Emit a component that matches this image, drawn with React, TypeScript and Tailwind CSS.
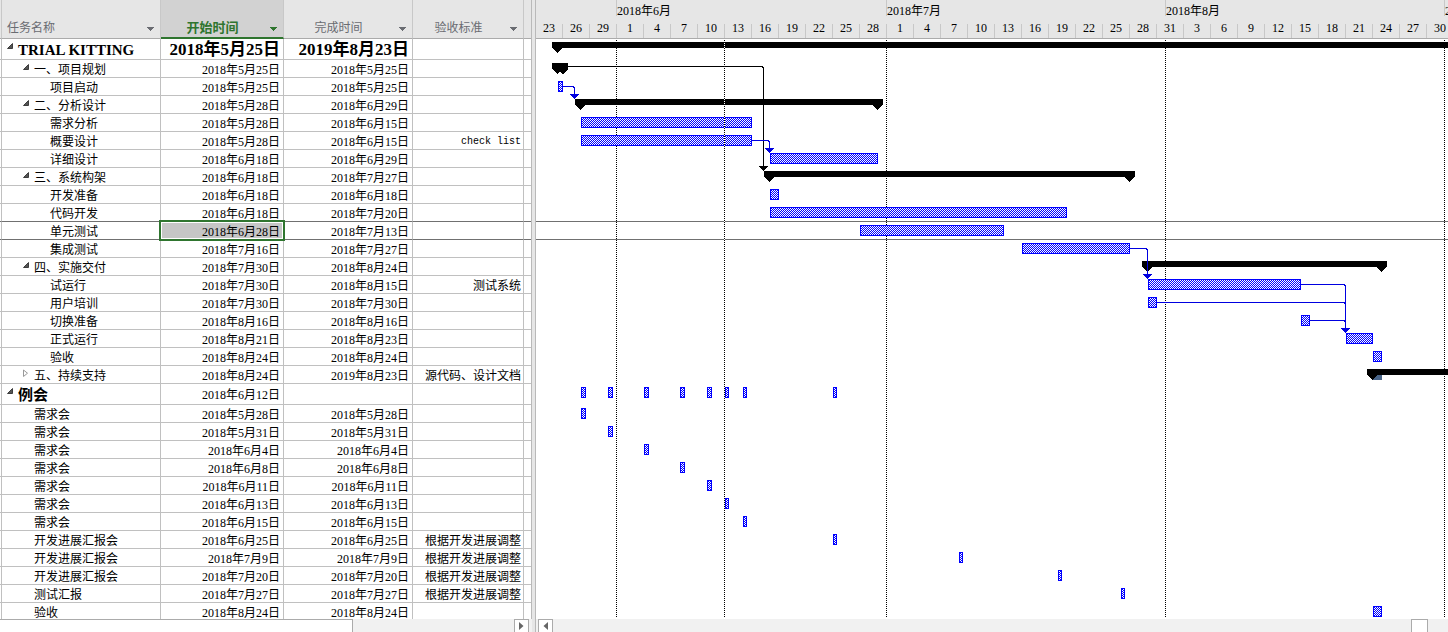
import React from 'react';

type Kind = 'title' | 'section' | 'task' | 'group' | 'meeting';

interface Row {
  kind: Kind;
  name: string;
  start: string;
  finish: string;
  note?: string;
  collapsed?: boolean;
  // [x, width] of each bar in the chart
  bars?: [number, number][];
}

const rows: Row[] = [
  { kind: 'title', name: 'TRIAL KITTING', start: '2018年5月25日', finish: '2019年8月23日' },
  { kind: 'section', name: '一、项目规划', start: '2018年5月25日', finish: '2018年5月25日' },
  { kind: 'task', name: '项目启动', start: '2018年5月25日', finish: '2018年5月25日', bars: [[22, 5]] },
  { kind: 'section', name: '二、分析设计', start: '2018年5月28日', finish: '2018年6月29日' },
  { kind: 'task', name: '需求分析', start: '2018年5月28日', finish: '2018年6月15日', bars: [[45, 171]] },
  { kind: 'task', name: '概要设计', start: '2018年5月28日', finish: '2018年6月15日', note: 'check list', bars: [[45, 171]] },
  { kind: 'task', name: '详细设计', start: '2018年6月18日', finish: '2018年6月29日', bars: [[234, 108]] },
  { kind: 'section', name: '三、系统构架', start: '2018年6月18日', finish: '2018年7月27日' },
  { kind: 'task', name: '开发准备', start: '2018年6月18日', finish: '2018年6月18日', bars: [[234, 9]] },
  { kind: 'task', name: '代码开发', start: '2018年6月18日', finish: '2018年7月20日', bars: [[234, 297]] },
  { kind: 'task', name: '单元测试', start: '2018年6月28日', finish: '2018年7月13日', bars: [[324, 144]] },
  { kind: 'task', name: '集成测试', start: '2018年7月16日', finish: '2018年7月27日', bars: [[486, 108]] },
  { kind: 'section', name: '四、实施交付', start: '2018年7月30日', finish: '2018年8月24日' },
  { kind: 'task', name: '试运行', start: '2018年7月30日', finish: '2018年8月15日', note: '测试系统', bars: [[612, 153]] },
  { kind: 'task', name: '用户培训', start: '2018年7月30日', finish: '2018年7月30日', bars: [[612, 9]] },
  { kind: 'task', name: '切换准备', start: '2018年8月16日', finish: '2018年8月16日', bars: [[765, 9]] },
  { kind: 'task', name: '正式运行', start: '2018年8月21日', finish: '2018年8月23日', bars: [[810, 27]] },
  { kind: 'task', name: '验收', start: '2018年8月24日', finish: '2018年8月24日', bars: [[837, 9]] },
  { kind: 'section', name: '五、持续支持', start: '2018年8月24日', finish: '2019年8月23日', note: '源代码、设计文档', collapsed: true },
  {
    kind: 'group', name: '例会', start: '2018年6月12日', finish: '',
    bars: [[45, 5], [72, 5], [108, 5], [144, 5], [171, 5], [189, 4], [207, 4], [297, 4]],
  },
  { kind: 'meeting', name: '需求会', start: '2018年5月28日', finish: '2018年5月28日', bars: [[45, 5]] },
  { kind: 'meeting', name: '需求会', start: '2018年5月31日', finish: '2018年5月31日', bars: [[72, 5]] },
  { kind: 'meeting', name: '需求会', start: '2018年6月4日', finish: '2018年6月4日', bars: [[108, 5]] },
  { kind: 'meeting', name: '需求会', start: '2018年6月8日', finish: '2018年6月8日', bars: [[144, 5]] },
  { kind: 'meeting', name: '需求会', start: '2018年6月11日', finish: '2018年6月11日', bars: [[171, 5]] },
  { kind: 'meeting', name: '需求会', start: '2018年6月13日', finish: '2018年6月13日', bars: [[189, 4]] },
  { kind: 'meeting', name: '需求会', start: '2018年6月15日', finish: '2018年6月15日', bars: [[207, 4]] },
  { kind: 'meeting', name: '开发进展汇报会', start: '2018年6月25日', finish: '2018年6月25日', note: '根据开发进展调整', bars: [[297, 4]] },
  { kind: 'meeting', name: '开发进展汇报会', start: '2018年7月9日', finish: '2018年7月9日', note: '根据开发进展调整', bars: [[423, 4]] },
  { kind: 'meeting', name: '开发进展汇报会', start: '2018年7月20日', finish: '2018年7月20日', note: '根据开发进展调整', bars: [[522, 4]] },
  { kind: 'meeting', name: '测试汇报', start: '2018年7月27日', finish: '2018年7月27日', note: '根据开发进展调整', bars: [[585, 4]] },
  { kind: 'meeting', name: '验收', start: '2018年8月24日', finish: '2018年8月24日', bars: [[837, 9]] },
];

const SELECTED = 10;
const LAST = rows.length - 1;

const isTall = (kind: Kind) => kind === 'title' || kind === 'group';
const rowTops = rows.map((_, i) => rows.slice(0, i).reduce((y, r) => y + (isTall(r.kind) ? 21 : 18), 0));

const days = [
  23, 26, 29, 1, 4, 7, 10, 13, 16, 19, 22, 25, 28, 1, 4, 7, 10, 13, 16, 19, 22, 25, 28, 31,
  3, 6, 9, 12, 15, 18, 21, 24, 27, 30,
];

const indent: Record<Kind, string> = {
  title: 'pl-[4px]',
  group: 'pl-[4px]',
  section: 'pl-[20px]',
  task: 'pl-[48px]',
  meeting: 'pl-[32px]',
};

function Toggle({ collapsed, name }: { collapsed?: boolean; name: string }) {
  return (
    <button type="button" aria-label={name} aria-expanded={!collapsed} className="flex h-[14px] w-[12px] shrink-0 items-start pt-[3px]">
      <svg width="8" height="9" viewBox="0 0 8 9">
        {collapsed ? (
          <path d="M1.5 1v6.500L5.500 4.200z" fill="#fff" stroke="#999" />
        ) : (
          <path d="M6.500 1.500v5h-5z" fill="#555" stroke="#222" strokeWidth="0.8" />
        )}
      </svg>
    </button>
  );
}

function ColumnHeader({ label, active, left }: { label: string; active?: boolean; left?: boolean }) {
  return (
    <th
      scope="col"
      className={
        active
          ? 'h-[39px] border-r border-b-2 border-r-[#c8c8c8] border-b-[#2f752f] bg-[#d2d2d2] p-0 align-top font-bold text-[#2f752f]'
          : 'h-[39px] border-r border-b border-r-[#c8c8c8] border-b-[#ababab] p-0 align-top font-normal text-[#6a6c72]'
      }
    >
      <div className="flex h-[37px] items-center pt-[18px]">
        <span className={left ? 'flex-1 pl-[5px] text-left text-[12px]' : active ? 'flex-1 text-center text-[13px]' : 'flex-1 text-center text-[12px]'}>
          {label}
        </span>
        <button type="button" aria-label={label} className="flex w-[19px] shrink-0 justify-center pt-[2px]">
          <svg width="7" height="4" viewBox="0 0 7 4" shapeRendering="crispEdges">
            <path d="M0 0h7L3.500 4z" fill="currentColor" />
          </svg>
        </button>
      </div>
    </th>
  );
}

function TaskTable() {
  return (
    <table className="w-full table-fixed border-separate border-spacing-0 border-r border-[#b9b9b9]">
      <colgroup>
        <col className="w-[2px]" />
        <col className="w-[159px]" />
        <col className="w-[123px]" />
        <col className="w-[129px]" />
        <col className="w-[111px]" />
        <col />
      </colgroup>
      <thead>
        <tr className="bg-[#e6e6e6]">
          <td className="border-r border-b border-r-[#c8c8c8] border-b-[#ababab] p-0" />
          <ColumnHeader label="任务名称" left />
          <ColumnHeader label="开始时间" active />
          <ColumnHeader label="完成时间" />
          <ColumnHeader label="验收标准" />
          <td className="border-b border-[#ababab] p-0" />
        </tr>
      </thead>
      <tbody>
        {rows.map((row, i) => {
          const line =
            i === LAST
              ? 'border-r border-r-[#c0c0c0] p-0 '
              : i === SELECTED || i === SELECTED - 1
                ? 'border-r border-b border-r-[#c0c0c0] border-b-[#707070] p-0 '
                : 'border-r border-b border-r-[#c0c0c0] border-b-[#c0c0c0] p-0 ';
          const box = isTall(row.kind) ? 'h-[20px] leading-[22px] ' : i === LAST ? 'h-[16px] leading-[20px] ' : 'h-[17px] leading-[20px] ';
          const dateSize = row.kind === 'title' ? 'text-[17px] font-bold ' : '';
          const toggled = row.kind === 'title' || row.kind === 'group' || row.kind === 'section';
          return (
            <tr key={i} className="whitespace-nowrap">
              <td className={line} />
              <td className={line}>
                <div className={box + 'flex items-start ' + indent[row.kind]}>
                  {toggled && <Toggle collapsed={row.collapsed} name={row.name} />}
                  <span className={isTall(row.kind) ? 'text-[15px] font-bold' : ''}>{row.name}</span>
                </div>
              </td>
              <td className={line + 'relative text-right'}>
                {i === SELECTED && (
                  <span className="absolute inset-0 z-10 border border-white bg-[#c6c6c6] outline-2 outline-[#2f752f]" />
                )}
                <div className={box + dateSize + 'relative z-20 pr-[3px]'}>{row.start}</div>
              </td>
              <td className={line + 'text-right'}>
                <div className={box + dateSize + 'pr-[3px]'}>{row.finish}</div>
              </td>
              <td className={line + 'text-right'}>
                <div className={box + (row.note === 'check list' ? "pr-[2px] font-['Liberation_Mono',monospace] text-[10px]" : 'pr-[2px]')}>
                  {row.note}
                </div>
              </td>
              <td className={line.replace('border-r ', '')} />
            </tr>
          );
        })}
      </tbody>
    </table>
  );
}

function Timescale() {
  return (
    <div className="flex h-[39px] flex-col justify-between overflow-hidden border-b border-[#ababab] bg-[#e6e6e6]">
      <div className="flex h-[16px] leading-[22px] whitespace-nowrap">
        <div className="w-[80px] shrink-0" />
        <div className="w-[270px] shrink-0 border-l border-[#c8c8c8]">2018年6月</div>
        <div className="w-[279px] shrink-0 border-l border-[#c8c8c8]">2018年7月</div>
        <div className="w-[279px] shrink-0 border-l border-[#c8c8c8]">2018年8月</div>
        <div className="w-[270px] shrink-0 border-l border-[#c8c8c8]">2018年9月</div>
      </div>
      <div className="flex h-[14px] leading-[8px]">
        {days.map((d, i) => (
          <div key={i} className="w-[27px] shrink-0 border-r border-[#c8c8c8] text-center">
            {d}
          </div>
        ))}
      </div>
    </div>
  );
}

function Summary({ row, from, to }: { row: number; from: number; to?: number }) {
  const y = rowTops[row] + 3;
  const end = to ?? 4000;
  return (
    <g fill="#000">
      <rect x={from} y={y} width={end - from} height="6" />
      <path d={`M${from} ${y + 5}h11l-5.5 6z`} />
      {to !== undefined && <path d={`M${to - 11} ${y + 5}h11l-5.5 6z`} />}
    </g>
  );
}

function Link({ d, x, y, color }: { d: string; x?: number; y?: number; color: string }) {
  return (
    <g>
      <path d={d} fill="none" stroke={color} />
      {x !== undefined && y !== undefined && <path d={`M${x - 4} ${y}h9l-4.5 5z`} fill={color} />}
    </g>
  );
}

function Chart() {
  return (
    <svg width="100%" height="580" className="block bg-white" shapeRendering="crispEdges" role="img" aria-label="2018年">
      <defs>
        <pattern id="hatch" width="2" height="2" patternUnits="userSpaceOnUse">
          <rect width="2" height="2" fill="#fff" />
          <rect width="1" height="1" fill="#0000ff" />
          <rect x="1" y="1" width="1" height="1" fill="#0000ff" />
        </pattern>
      </defs>
      <rect y="182" width="100%" height="1" fill="#707070" />
      <rect y="200" width="100%" height="1" fill="#707070" />
      {[80, 350, 629, 908].map((x) => (
        <path key={x} d={`M${x + 0.5} 1V578`} stroke="#000" strokeDasharray="1 1" />
      ))}

      <Summary row={0} from={16} />
      <path d="M16 24h16v6l-5 5-3-2-3 2-5-5z" fill="#000" />
      <Summary row={3} from={39} to={347} />
      <Summary row={7} from={228} to={599} />
      <Summary row={12} from={606} to={851} />
      <rect x="837" y="336" width="9" height="5" fill="#486488" />
      <Summary row={18} from={831} />

      {rows.map((row, i) =>
        (row.bars ?? []).map(([x, w]) => (
          <g key={`${i}-${x}`}>
            <rect x={x} y={rowTops[i] + 3} width={w} height="11" fill="#0000ff" />
            <rect x={x + 1} y={rowTops[i] + 4} width={w - 2} height="9" fill="url(#hatch)" />
          </g>
        )),
      )}

      <path d="M188.500 1V578" stroke="#fff" />
      <path d="M188.500 1V578" stroke="#000" strokeDasharray="1 1" />

      <Link color="#000" d="M32 27.500H226L227.500 29V128" x={227} y={127} />
      <Link color="#0000e0" d="M27 47.500H37L38.500 49V56" x={38} y={55} />
      <Link color="#0000e0" d="M216 101.500H232L233.500 103V110" x={233} y={109} />
      <Link color="#0000e0" d="M594 209.500H610L611.500 211V236" x={611} y={235} />
      <Link color="#0000e0" d="M765 245.500H808L809.500 247V290" x={809} y={289} />
      <Link color="#0000e0" d="M621 263.500H808L809.500 265" />
      <Link color="#0000e0" d="M774 281.500H808L809.500 283" />
    </svg>
  );
}

export default function App() {
  return (
    <div className="flex w-full overflow-hidden bg-white font-['Liberation_Serif','Noto_Sans_CJK_SC',serif] text-[12px] text-black">
      <section className="w-[532px] shrink-0">
        <TaskTable />
        <div className="flex h-[13px] justify-between overflow-hidden bg-[#f1f1f1] pr-[3px]">
          <div className="w-[353px] border-t border-r border-[#ababab] bg-white" />
          <button type="button" aria-label="向右滚动" className="flex w-[15px] items-center justify-center border border-b-0 border-[#ababab] bg-white">
            <svg width="5" height="8" viewBox="0 0 5 8">
              <path d="M0 0v8l4.500-4z" fill="#666" />
            </svg>
          </button>
        </div>
      </section>
      <div className="w-[4px] shrink-0 border-r border-[#b9b9b9] bg-[#e6e6e6]" />
      <section className="min-w-0 flex-1">
        <Timescale />
        <Chart />
        <div className="flex h-[13px] justify-between overflow-hidden bg-[#f1f1f1] pr-5 pl-[2px]">
          <button type="button" aria-label="向左滚动" className="flex w-[15px] items-center justify-center border border-b-0 border-[#ababab] bg-white">
            <svg width="5" height="8" viewBox="0 0 5 8">
              <path d="M5 0v8L0.500 4z" fill="#666" />
            </svg>
          </button>
          <div className="w-[17px] border border-b-0 border-[#ababab] bg-white" />
        </div>
      </section>
    </div>
  );
}
